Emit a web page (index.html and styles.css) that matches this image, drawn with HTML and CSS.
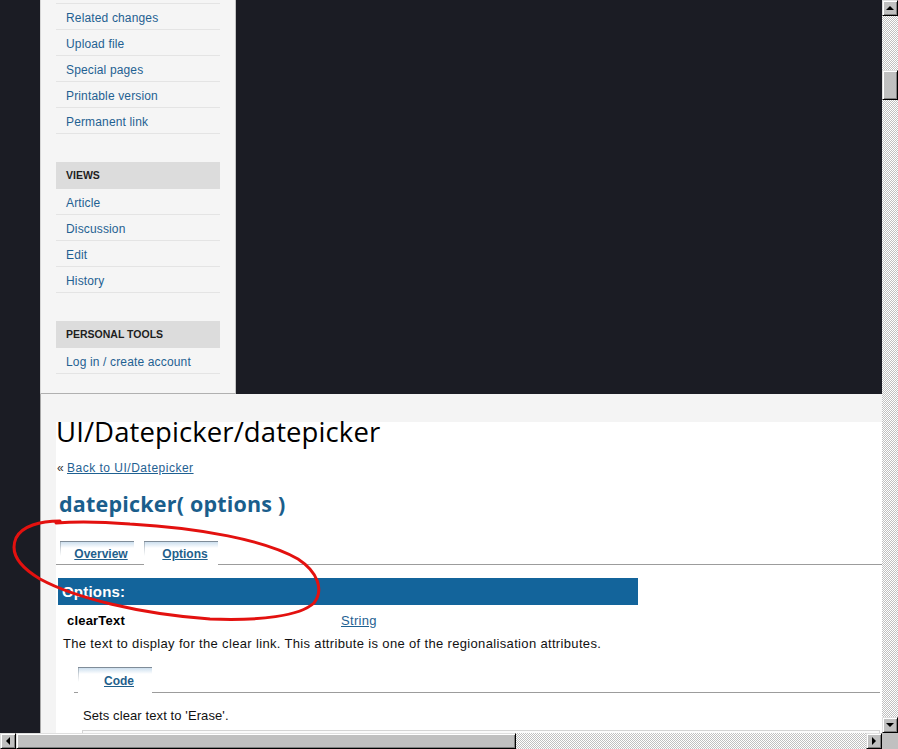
FILE: index.html
```html
<!DOCTYPE html>
<html lang="en">
<head>
<meta charset="utf-8">
<title>UI/Datepicker/datepicker</title>
<link rel="stylesheet" href="styles.css">
</head>
<body>
<div class="screen">
  <div class="viewport">
    <div class="page">
      <aside class="sidebar">
        <ul class="menu">
          <li class="menu-spacer"></li>
          <li><a href="#">Related changes</a></li>
          <li><a href="#">Upload file</a></li>
          <li><a href="#">Special pages</a></li>
          <li><a href="#">Printable version</a></li>
          <li><a href="#">Permanent link</a></li>
        </ul>
        <div class="portlet">
          <h3>Views</h3>
          <ul class="menu">
            <li><a href="#">Article</a></li>
            <li><a href="#">Discussion</a></li>
            <li><a href="#">Edit</a></li>
            <li><a href="#">History</a></li>
          </ul>
        </div>
        <div class="portlet">
          <h3>Personal tools</h3>
          <ul class="menu">
            <li><a href="#">Log in / create account</a></li>
          </ul>
        </div>
      </aside>
      <main class="main">
        <div class="content">
          <h1 class="title">UI/Datepicker/datepicker</h1>
          <div class="back">&laquo; <a href="#">Back to UI/Datepicker</a></div>
          <h2 class="subtitle">datepicker( options )</h2>
          <div class="tabs">
            <div class="tab"><a href="#">Overview</a></div>
            <div class="tab active"><a href="#">Options</a></div>
          </div>
          <div class="options">
            <div class="options-head">Options:</div>
            <div class="option-row">
              <div class="option-name">clearText</div>
              <div class="option-type"><a href="#">String</a></div>
            </div>
            <div class="option-desc">The text to display for the clear link. This attribute is one of the regionalisation attributes.</div>
            <div class="example">
              <div class="tabs tabs-small">
                <div class="tab active"><a href="#">Code</a></div>
              </div>
              <div class="example-text">Sets clear text to 'Erase'.</div>
              <div class="code-box"></div>
            </div>
          </div>
        </div>
      </main>
    </div>
    <svg class="annotation" width="882" height="733" viewBox="0 0 882 733">
      <path d="M 60 521 C 40 521, 22 526, 16 538 C 10 552, 18 566, 40 579 C 75 598, 140 614, 210 619 C 260 621, 300 616, 314 603 C 324 590, 318 572, 298 559 C 265 540, 200 528, 130 524 C 105 522, 80 521, 56 523" />
    </svg>
  </div>
  <div class="vscroll">
    <div class="sbtn"><span class="arrow up"></span></div>
    <div class="thumb vthumb"></div>
    <div class="track"></div>
    <div class="sbtn"><span class="arrow down"></span></div>
  </div>
  <div class="hscroll">
    <div class="sbtn"><span class="arrow left"></span></div>
    <div class="thumb hthumb"></div>
    <div class="track"></div>
    <div class="sbtn"><span class="arrow right"></span></div>
  </div>
  <div class="corner"></div>
</div>
</body>
</html>
```
FILE: styles.css
```css
* { box-sizing: border-box; }
html, body { margin: 0; padding: 0; height: 100%; }
body {
  font-family: "Liberation Sans", Arial, sans-serif;
  overflow: hidden;
  background: #c0c0c0;
}
.screen {
  display: grid;
  grid-template-columns: 882px 16px;
  grid-template-rows: 733px 16px;
  width: 898px;
  height: 749px;
}
.viewport {
  position: relative;
  overflow: hidden;
  background: #1b1c24;
}
.page {
  display: flex;
  flex-direction: column;
  align-items: flex-start;
  padding-left: 40px;
  height: 100%;
}

/* sidebar */
.sidebar {
  margin-top: -22px;
  width: 196px;
  padding: 0 15px 19px;
  background: #f5f5f5;
  border-left: 1px solid #d6d6d6;
  border-right: 1px solid #c4c4c4;
  border-bottom: 1px solid #b0b0b0;
}
.menu {
  list-style: none;
  margin: 0;
  padding: 0;
}
.menu li {
  height: 26px;
  border-bottom: 1px solid #e4e4e4;
  padding: 4px 0 0 10px;
  font-size: 12px;
  line-height: 21px;
  letter-spacing: 0.15px;
}
.menu a {
  color: #1f6192;
  text-decoration: none;
}
.portlet { margin-top: 28px; }
.portlet h3 {
  margin: 0;
  height: 27px;
  line-height: 27px;
  background: #dcdcdc;
  padding-left: 10px;
  font-size: 10.5px;
  font-weight: bold;
  color: #1e1e1e;
  text-transform: uppercase;
}

/* main */
.main {
  align-self: stretch;
  flex: 1;
  border-left: 1px solid #a8a8a8;
  background: #f4f4f4;
  padding: 28px 0 0 15px;
}
.content {
  background: #fff;
  height: 100%;
}
.title {
  margin: 0;
  font-family: "Open Sans", "Liberation Sans", sans-serif;
  font-size: 27.5px;
  font-weight: 400;
  line-height: 20px;
  letter-spacing: 0.1px;
  color: #000;
}
.back {
  margin-top: 19px;
  padding-left: 1px;
  font-size: 12px;
  line-height: 14px;
  color: #333;
}
.back a { color: #1f6192; letter-spacing: 0.5px; }
.subtitle {
  margin: 17px 0 0 3px;
  font-family: "Open Sans", "Liberation Sans", sans-serif;
  font-weight: 700;
  font-size: 21.5px;
  line-height: 24px;
  letter-spacing: 0.2px;
  color: #1a5e8c;
}

/* tabs */
.tabs {
  display: flex;
  gap: 10px;
  margin-top: 25px;
  padding-left: 4px;
  height: 24px;
  border-bottom: 1px solid #9c9c9c;
}
.tab {
  width: 74px;
  height: 23px;
  border-top: 1px solid #7f8c98;
  background:
    linear-gradient(#a9b4be, rgba(255,255,255,0) 14px) left top / 1px 100% no-repeat,
    linear-gradient(#cddfee, #e6eff7 3px, #fff 6px);
  padding: 5px 0 0 8px;
  text-align: center;
  font-size: 12px;
  font-weight: bold;
  line-height: 14px;
}
.tab.active { height: 24px; }
.tab a { color: #1f5f8c; text-decoration: underline; }
.tabs-small {
  margin-top: 0;
  height: 26px;
}
.tabs-small .tab { height: 25px; padding-top: 6px; }
.tabs-small .tab.active { height: 26px; }

/* options */
.options {
  width: 580px;
  margin: 13px 0 0 2px;
}
.options-head {
  height: 27px;
  line-height: 27px;
  padding-left: 4px;
  background: #13649b;
  color: #fff;
  font-size: 15px;
  font-weight: bold;
  letter-spacing: 0.2px;
}
.option-row {
  display: flex;
  align-items: center;
  height: 30px;
  padding-top: 1px;
}
.option-name {
  width: 283px;
  padding-left: 9px;
  font-size: 13px;
  font-weight: bold;
  letter-spacing: 0.2px;
  color: #000;
}
.option-type { font-size: 13px; letter-spacing: 0.3px; }
.option-type a { color: #1f6192; }
.option-desc {
  padding-left: 5px;
  margin-top: 1px;
  font-size: 13px;
  line-height: 16px;
  letter-spacing: 0.34px;
  color: #111;
  white-space: nowrap;
}
.example {
  width: 806px;
  margin: 15px 0 0 16px;
}
.example-text {
  margin-top: 16px;
  padding-left: 9px;
  font-size: 13px;
  line-height: 14px;
  letter-spacing: 0.1px;
  color: #111;
}
.code-box {
  margin: 7px 0 0 8px;
  height: 40px;
  border: 1px solid #d4d4d4;
  background: #fafafa;
}

/* annotation */
.annotation {
  position: absolute;
  left: 0;
  top: 0;
  pointer-events: none;
}
.annotation path {
  fill: none;
  stroke: #e3110f;
  stroke-width: 3;
  stroke-linecap: round;
  stroke-linejoin: round;
}

/* scrollbars */
.vscroll, .hscroll {
  display: flex;
  background-color: #fff;
  background-image: repeating-conic-gradient(#c0c0c0 0 25%, #fff 0 50%);
  background-size: 2px 2px;
}
.vscroll { flex-direction: column; }
.hscroll { flex-direction: row; }
.track { flex: 1; }
.sbtn, .thumb {
  flex: none;
  background: #c0c0c0;
  border-style: solid;
  border-width: 1px;
  border-color: #dfdfdf #000 #000 #dfdfdf;
  box-shadow: inset 1px 1px #fff, inset -1px -1px #808080;
}
.sbtn {
  width: 16px;
  height: 16px;
  display: flex;
  align-items: center;
  justify-content: center;
}
.vthumb { height: 30px; margin-top: 54px; }
.hthumb { width: 500px; }
.arrow { width: 0; height: 0; border: 0 solid transparent; }
.arrow.up { border-width: 0 4px 4px; border-bottom-color: #000; }
.arrow.down { border-width: 4px 4px 0; border-top-color: #000; }
.arrow.left { border-width: 4px 4px 4px 0; border-right-color: #000; }
.arrow.right { border-width: 4px 0 4px 4px; border-left-color: #000; }
.corner { background: #c0c0c0; }
```
